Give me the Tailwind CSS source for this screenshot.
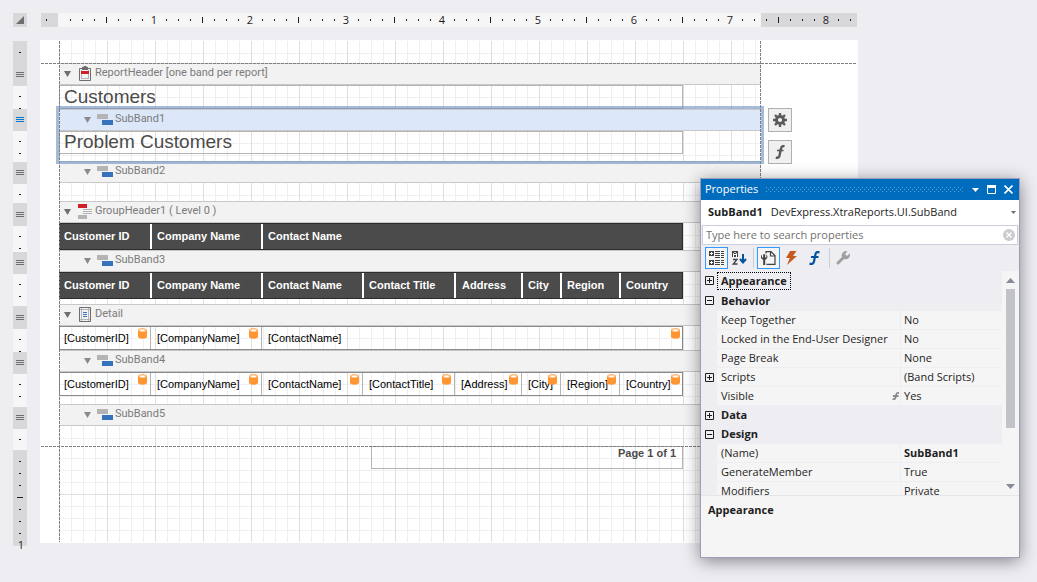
<!DOCTYPE html>
<html lang="en">
  <head>
    <meta charset="UTF-8" />
    <meta name="viewport" content="width=device-width, initial-scale=1.0" />
    <title>Report Designer</title>
    <script src="https://cdn.jsdelivr.net/npm/@tailwindcss/browser@4"></script>
  </head>

  <body class="relative min-h-screen overflow-hidden bg-[#eeedf2] font-['Open_Sans',sans-serif] text-[11px] text-[#1e1e1e]">
    <!-- shared symbols -->
    <svg class="hidden">
      <symbol id="sub" viewBox="0 0 16 11">
        <path fill="#b4b4b4" d="M0 0h11v5H0z" />
        <path fill="#3574bd" d="M5 6h11v5H5z" />
      </symbol>
      <symbol id="db" viewBox="0 0 9 11">
        <path fill="#ff9632" d="M0 2.500C0 1 2 .3 4.500.3S9 1 9 2.500v6c0 1.500-2 2.200-4.500 2.200S0 10 0 8.500z" />
        <ellipse cx="4.500" cy="2.300" rx="4" ry="1.800" fill="#ffc185" />
        <ellipse cx="4.500" cy="2.400" rx="2.500" ry=".8" fill="#fff" />
      </symbol>
      <symbol id="tri" viewBox="0 0 7 6"><path fill="currentColor" d="M0 0h7L3.500 6z" /></symbol>
      <symbol id="grip" viewBox="0 0 8 5"><path fill="currentColor" d="M0 0h8v1H0zM0 2h8v1H0zM0 4h8v1H0z" /></symbol>
      <symbol id="plus" viewBox="0 0 9 9"><path fill="none" stroke="#1e1e1e" d="M.5.5h8v8h-8zM2 4.500h5M4.500 2v5" /></symbol>
      <symbol id="minus" viewBox="0 0 9 9"><path fill="none" stroke="#1e1e1e" d="M.5.5h8v8h-8zM2 4.500h5" /></symbol>
    </svg>

    <main class="pt-[13px] pl-[13px] pr-[179px]">
      <!-- horizontal ruler -->
      <div class="mr-px flex gap-3.5">
        <button class="flex size-3.5 items-center justify-center bg-[#d8d8da]" aria-label="Select report">
          <svg class="size-2" viewBox="0 0 8 8"><path fill="#6e6e6e" d="M8 0v8H0z" /></svg>
        </button>
        <svg class="h-3.5 min-w-0 flex-1 bg-[#f6f6f6]" font-size="11" fill="#1e1e1e" text-anchor="middle">
          <defs>
            <pattern id="ticks" x="17" width="96" height="14" patternUnits="userSpaceOnUse">
              <path d="M12 6h1v2h-1zM24 6h1v2h-1zM36 6h1v2h-1zM48 4h1v6h-1zM60 6h1v2h-1zM72 6h1v2h-1zM84 6h1v2h-1z" />
            </pattern>
          </defs>
          <rect width="17" height="14" fill="#d8d8da" />
          <rect x="720" width="100%" height="14" fill="#d8d8da" />
          <path d="M5 6h1v2H5z" />
          <rect x="17" width="100%" height="14" fill="url(#ticks)" />
          <text x="113" y="11">1</text>
          <text x="209" y="11">2</text>
          <text x="305" y="11">3</text>
          <text x="401" y="11">4</text>
          <text x="497" y="11">5</text>
          <text x="593" y="11">6</text>
          <text x="689" y="11">7</text>
          <text x="785" y="11">8</text>
        </svg>
      </div>

      <div class="mt-[13px] flex items-start gap-[13px]">
        <!-- vertical ruler -->
        <div class="mt-px flex w-3.5 flex-col bg-[#f6f6f6] text-[#6e6e6e] *:shrink-0 *:bg-no-repeat *:data-ticks:bg-[repeating-linear-gradient(#1e1e1e_0_1px,transparent_1px_12px)] *:data-ticks:bg-[position:6px_10px] *:data-ticks:bg-[size:2px_100%]">
          <div class="flex h-[45px] flex-col items-center bg-[#d8d8da]">
            <span class="mt-[11px] h-px w-0.5 bg-[#1e1e1e]"></span>
            <svg class="mt-[19px] h-[5px] w-2"><use href="#grip" /></svg>
          </div>
          <div data-ticks class="h-[23px]"></div>
          <div class="flex h-[22px] justify-center bg-[#d8d8da] pt-2 text-[#0078d0]"><svg class="h-[5px] w-2"><use href="#grip" /></svg></div>
          <div data-ticks class="h-[31px]"></div>
          <div class="flex h-[22px] justify-center bg-[#d8d8da] pt-2"><svg class="h-[5px] w-2"><use href="#grip" /></svg></div>
          <div data-ticks class="h-[19px]"></div>
          <div class="flex h-[23px] justify-center bg-[#d8d8da] pt-[9px]"><svg class="h-[5px] w-2"><use href="#grip" /></svg></div>
          <div data-ticks class="h-[26px]"></div>
          <div class="flex h-[22px] justify-center bg-[#d8d8da] pt-2"><svg class="h-[5px] w-2"><use href="#grip" /></svg></div>
          <div data-ticks class="h-8"></div>
          <div class="flex h-[23px] justify-center bg-[#d8d8da] pt-[9px]"><svg class="h-[5px] w-2"><use href="#grip" /></svg></div>
          <div data-ticks class="h-[23px]"></div>
          <div class="flex h-[22px] justify-center bg-[#d8d8da] pt-2"><svg class="h-[5px] w-2"><use href="#grip" /></svg></div>
          <div data-ticks class="h-[33px]"></div>
          <div class="flex h-[22px] justify-center bg-[#d8d8da] pt-2"><svg class="h-[5px] w-2"><use href="#grip" /></svg></div>
          <div data-ticks class="h-[21px]"></div>
          <svg class="h-[96px] w-3.5 overflow-visible bg-[#d8d8da]" font-size="11" fill="#1e1e1e" text-anchor="middle">
            <path d="M6 11h2v1H6zM6 23h2v1H6zM6 35h2v1H6zM4 47h6v1H4zM6 59h2v1H6zM6 71h2v1H6zM6 83h2v1H6z" />
            <text x="8" y="99">1</text>
          </svg>
        </div>

        <!-- report page -->
        <div class="relative flex min-w-0 flex-1 bg-white pl-[19px] [&_[data-grid]]:bg-[linear-gradient(90deg,#dfdfdf_1px,transparent_1px),repeating-linear-gradient(#dfdfdf_0_1px,transparent_1px_48px),linear-gradient(90deg,#efefef_1px,transparent_1px),repeating-linear-gradient(#efefef_0_1px,transparent_1px_12px)] [&_[data-grid]]:bg-[position:0_0,0_48px,0_0,0_12px] [&_[data-grid]]:bg-[size:48px_100%,100%_100%,12px_100%,100%_100%] [&_[data-grid]]:[background-repeat:repeat-x,no-repeat,repeat-x,no-repeat]">
          <div class="relative min-w-0 flex-1 font-['Liberation_Sans',sans-serif] [&_h2]:flex [&_h2]:h-[22px] [&_h2]:items-center [&_h2]:border-y [&_h2]:border-[#c8c8c8] [&_h2]:bg-[#f2f2f2] [&_h2]:pb-px [&_h2]:font-['Roboto',sans-serif] [&_h2]:text-[11px] [&_h2]:text-[#7b7b7b]">
            <div data-grid class="mt-px h-[22px]"></div>

            <section>
              <h2 class="pl-[5px]">
                <svg class="h-1.5 w-[7px] text-[#6e6e6e]"><use href="#tri" /></svg>
                <svg class="ml-2 mr-1 h-[15px] w-3" viewBox="0 0 12 15">
                  <path fill="none" stroke="#6e6e6e" d="M.5 2.500h11v12H.5z" />
                  <path fill="none" stroke="#b4b4b4" d="M2.500 4v9M9.500 4v9M2 12.500h8" />
                  <path fill="#6e6e6e" d="M3 1h1.500V0h3v1H9v3H3z" />
                  <path fill="#d11f26" d="M2 5h8v3H2z" />
                </svg>
                ReportHeader [one band per report]
              </h2>
              <div data-grid class="h-6">
                <p class="h-6 w-[624px] border border-[#b4b4b4] pl-1 text-[19px] leading-[22px] text-[#4b4b4b]">Customers</p>
              </div>
            </section>

            <section class="relative">
              <h2 class="bg-[#dce8fa]! pl-[25px]">
                <svg class="h-1.5 w-[7px] text-[#8a8a8a]"><use href="#tri" /></svg>
                <svg class="ml-1.5 mr-0.5 h-[11px] w-4"><use href="#sub" /></svg>
                SubBand1
              </h2>
              <div data-grid class="h-[30px]">
                <p class="h-[23px] w-[624px] border border-[#b4b4b4] pl-1 text-[19px] leading-5 text-[#4b4b4b]">Problem Customers</p>
              </div>
              <!-- selection frame -->
              <div class="pointer-events-none absolute -inset-[3px] z-10 border-[3px] border-[#698ebe]/60"></div>
            </section>

            <section>
              <h2 class="pl-[25px]">
                <svg class="h-1.5 w-[7px] text-[#8a8a8a]"><use href="#tri" /></svg>
                <svg class="ml-1.5 mr-0.5 h-[11px] w-4"><use href="#sub" /></svg>
                SubBand2
              </h2>
              <div data-grid class="h-[18px]"></div>
            </section>

            <section>
              <h2 class="pl-[5px]">
                <svg class="h-1.5 w-[7px] text-[#6e6e6e]"><use href="#tri" /></svg>
                <svg class="ml-[7px] mr-[3px] h-[15px] w-3.5" viewBox="0 0 14 15">
                  <path fill="#d11f26" d="M0 0h9v4H0z" />
                  <path fill="#b4b4b4" d="M5 5h9v1H5zM5 7h9v1H5zM5 9h9v1H5zM0 11h9v4H0z" />
                </svg>
                GroupHeader1 ( Level 0 )
              </h2>
              <div data-grid class="h-[27px]">
                <table class="h-[27px] w-[624px] table-fixed border-separate border-spacing-0 border border-[#2d2d2d] bg-[#4b4b4b] text-left font-bold text-white">
                  <tr>
                    <th class="w-[92px] border-r-2 border-white pl-1">Customer ID</th>
                    <th class="w-[111px] border-r-2 border-white pl-[5px]">Company Name</th>
                    <th class="pl-[5px]">Contact Name</th>
                  </tr>
                </table>
              </div>
            </section>

            <section>
              <h2 class="pl-[25px]">
                <svg class="h-1.5 w-[7px] text-[#8a8a8a]"><use href="#tri" /></svg>
                <svg class="ml-1.5 mr-0.5 h-[11px] w-4"><use href="#sub" /></svg>
                SubBand3
              </h2>
              <div data-grid class="h-8">
                <table class="h-[27px] w-[624px] table-fixed border-separate border-spacing-0 border border-[#2d2d2d] bg-[#4b4b4b] text-left font-bold text-white">
                  <tr>
                    <th class="w-[92px] border-r-2 border-white pl-1">Customer ID</th>
                    <th class="w-[111px] border-r-2 border-white pl-[5px]">Company Name</th>
                    <th class="w-[101px] border-r-2 border-white pl-[5px]">Contact Name</th>
                    <th class="w-[92px] border-r-2 border-white pl-[5px]">Contact Title</th>
                    <th class="w-[67px] border-r-2 border-white pl-1.5">Address</th>
                    <th class="w-[39px] border-r-2 border-white pl-[5px]">City</th>
                    <th class="w-[59px] border-r-2 border-white pl-[5px]">Region</th>
                    <th class="pl-[5px]">Country</th>
                  </tr>
                </table>
              </div>
            </section>

            <section>
              <h2 class="pl-[5px]">
                <svg class="h-1.5 w-[7px] text-[#6e6e6e]"><use href="#tri" /></svg>
                <svg class="ml-2 mr-1 h-[15px] w-3" viewBox="0 0 12 15">
                  <path fill="none" stroke="#6e6e6e" d="M.5.5h11v14H.5z" />
                  <path fill="none" stroke="#b4b4b4" d="M2.500 1v13M9.500 1v13M1 2.500h10M1 12.500h10" />
                  <path fill="#3574bd" d="M4 5h4v1H4zM4 7h4v1H4zM4 9h4v1H4z" />
                </svg>
                Detail
              </h2>
              <div data-grid class="h-6">
                <table class="h-6 w-[624px] table-fixed border-separate border-spacing-0 border border-[#8a8a8a] text-black">
                  <tr>
                    <td class="relative w-[91px] border-r border-[#b4b4b4] pl-1">[CustomerID]<svg class="absolute top-px right-[3px] h-[11px] w-[9px]"><use href="#db" /></svg></td>
                    <td class="relative w-[111px] border-r border-[#b4b4b4] pl-1.5">[CompanyName]<svg class="absolute top-px right-[3px] h-[11px] w-[9px]"><use href="#db" /></svg></td>
                    <td class="relative pl-1.5">[ContactName]<svg class="absolute top-px right-0.5 h-[11px] w-[9px]"><use href="#db" /></svg></td>
                  </tr>
                </table>
              </div>
            </section>

            <section>
              <h2 class="pl-[25px]">
                <svg class="h-1.5 w-[7px] text-[#8a8a8a]"><use href="#tri" /></svg>
                <svg class="ml-1.5 mr-0.5 h-[11px] w-4"><use href="#sub" /></svg>
                SubBand4
              </h2>
              <div data-grid class="h-8">
                <table class="h-6 w-[624px] table-fixed border-separate border-spacing-0 border border-[#8a8a8a] text-black">
                  <tr>
                    <td class="relative w-[91px] border-r border-[#b4b4b4] pl-1">[CustomerID]<svg class="absolute top-px right-[3px] h-[11px] w-[9px]"><use href="#db" /></svg></td>
                    <td class="relative w-[111px] border-r border-[#b4b4b4] pl-1.5">[CompanyName]<svg class="absolute top-px right-[3px] h-[11px] w-[9px]"><use href="#db" /></svg></td>
                    <td class="relative w-[101px] border-r border-[#b4b4b4] pl-1.5">[ContactName]<svg class="absolute top-px right-[3px] h-[11px] w-[9px]"><use href="#db" /></svg></td>
                    <td class="relative w-[92px] border-r border-[#b4b4b4] pl-1.5">[ContactTitle]<svg class="absolute top-px right-[3px] h-[11px] w-[9px]"><use href="#db" /></svg></td>
                    <td class="relative w-[67px] border-r border-[#b4b4b4] pl-1.5">[Address]<svg class="absolute top-px right-[3px] h-[11px] w-[9px]"><use href="#db" /></svg></td>
                    <td class="relative w-[39px] border-r border-[#b4b4b4] pl-1.5">[City]<svg class="absolute top-px right-[3px] h-[11px] w-[9px]"><use href="#db" /></svg></td>
                    <td class="relative w-[59px] border-r border-[#b4b4b4] pl-1.5">[Region]<svg class="absolute top-px right-[3px] h-[11px] w-[9px]"><use href="#db" /></svg></td>
                    <td class="relative pl-1.5">[Country]<svg class="absolute top-px right-0.5 h-[11px] w-[9px]"><use href="#db" /></svg></td>
                  </tr>
                </table>
              </div>
            </section>

            <section>
              <h2 class="pl-[25px]">
                <svg class="h-1.5 w-[7px] text-[#8a8a8a]"><use href="#tri" /></svg>
                <svg class="ml-1.5 mr-0.5 h-[11px] w-4"><use href="#sub" /></svg>
                SubBand5
              </h2>
              <div data-grid class="h-5"></div>
            </section>

            <div data-grid class="mb-px h-24">
              <p class="ml-[312px] h-[23px] w-[312px] border border-[#b4b4b4] pr-1.5 text-right leading-3 font-bold text-[#4b4b4b]">Page 1 of 1</p>
            </div>

            <!-- side margin guides -->
            <div class="absolute inset-y-px left-0 w-px bg-[repeating-linear-gradient(#808080_0_3px,transparent_3px_4px)]"></div>
            <div class="absolute inset-y-px right-0 w-px bg-[repeating-linear-gradient(#808080_0_3px,transparent_3px_4px)]"></div>
          </div>

          <div class="flex w-[97px] flex-col gap-2 pt-[68px] pl-[7px]">
            <button class="flex size-6 items-center justify-center border border-[#b0b0b0] bg-[#f0f0f0]" aria-label="Smart tag">
              <svg class="size-3.5" viewBox="-7 -7 14 14" fill="none" stroke="#5a5a5a">
                <circle r="3.600" stroke-width="3" />
                <path stroke-width="2.400" d="M0-7v2.500M0 7V4.500M-7 0h2.500M7 0H4.500M-5-5l1.800 1.800M5 5 3.200 3.200M-5 5l1.800-1.800M5-5 3.200-3.200" />
              </svg>
            </button>
            <button class="flex size-6 items-center justify-center border border-[#b0b0b0] bg-[#f0f0f0]" aria-label="Expression editor">
              <svg class="h-3.5 w-2.5" viewBox="0 0 10 14" fill="none" stroke="#5a5a5a">
                <path stroke-width="2.400" d="M9.500 1.300C7.500.7 6.400 1.500 6 3.500L4.500 10.500C4.100 12.500 3 13.200.8 12.600" />
                <path stroke-width="1.600" d="M2 5.500h6.500" />
              </svg>
            </button>
          </div>

          <!-- top and bottom margin guides -->
          <div class="absolute inset-x-px top-[23px] h-px bg-[repeating-linear-gradient(90deg,#808080_0_3px,transparent_3px_4px)]"></div>
          <div class="absolute inset-x-px bottom-24 h-px bg-[repeating-linear-gradient(90deg,#808080_0_3px,transparent_3px_4px)]"></div>
        </div>
      </div>
    </main>

    <!-- floating tool window -->
    <aside class="absolute top-[178px] right-[17px] z-20 w-80 border border-[#9b9fb9] bg-[#eeedf2] shadow-[0_3px_16px_rgba(0,0,0,0.45)]">
      <header class="flex h-[21px] items-center bg-[#006cbe] pr-1.5 pl-1 text-white">
        <h1 class="text-[11px]">Properties</h1>
        <svg class="mx-2 h-[5px] min-w-0 flex-1">
          <pattern id="dots" width="4" height="4" patternUnits="userSpaceOnUse"><path fill="#59a8de" d="M0 0h1v1H0zM2 2h1v1H2z" /></pattern>
          <rect width="100%" height="5" fill="url(#dots)" />
        </svg>
        <button class="flex w-2 justify-center" aria-label="Window position"><svg class="h-1 w-[7px]" viewBox="0 0 7 4"><path fill="#fff" d="M0 0h7L3.500 4z" /></svg></button>
        <button class="ml-2" aria-label="Maximize"><svg class="size-[9px]" viewBox="0 0 9 9"><path fill="none" stroke="#fff" d="M.5.5h8v8h-8z" /><path fill="#fff" d="M0 0h9v3H0z" /></svg></button>
        <button class="ml-2" aria-label="Close"><svg class="size-[9px]" viewBox="0 0 9 9"><path stroke="#fff" stroke-width="1.600" d="m.5.5 8 8m0-8-8 8" /></svg></button>
      </header>

      <button class="flex h-[25px] w-full items-center bg-white pr-[3px] pl-[7px]" aria-haspopup="listbox">
        <b>SubBand1</b><span class="ml-2">DevExpress.XtraReports.UI.SubBand</span>
        <svg class="ml-auto h-[3px] w-[5px]" viewBox="0 0 5 3"><path fill="#6e6e6e" d="M0 0h5L2.500 3z" /></svg>
      </button>

      <div class="mx-px flex h-5 items-center border border-[#ccccdc] bg-white pr-0.5 pl-[3px]">
        <input class="min-w-0 flex-1 outline-none placeholder:text-[#717171]" type="text" placeholder="Type here to search properties" aria-label="Search properties" />
        <button aria-label="Clear">
          <svg class="size-3" viewBox="0 0 12 12"><circle cx="6" cy="6" r="6" fill="#ccc" /><path stroke="#fff" stroke-width="1.300" d="m3.500 3.500 5 5m0-5-5 5" /></svg>
        </button>
      </div>

      <div class="flex h-[26px] items-center pl-1">
        <button class="flex h-[22px] w-[23px] items-center justify-center border border-[#3399ff] bg-[#f5f5f5]" aria-label="Categorized">
          <svg class="h-3.5 w-[15px]" viewBox="0 0 15 14">
            <path fill="#424242" d="M0 0h5v5H0zM0 9h5v5H0z" />
            <path fill="#fff" d="M1 2h3v1H1zM2 1h1v3H2zM1 11h3v1H1zM2 10h1v3H2z" />
            <path stroke="#424242" stroke-dasharray="5 1 3 1" d="M6 .5h9M6 2.500h9M6 4.500h9M6 6.500h9M6 9.500h9M6 11.500h9M6 13.500h9" />
          </svg>
        </button>
        <button class="ml-1" aria-label="Alphabetical">
          <svg class="h-3.5 w-[15px]" viewBox="0 0 15 14">
            <path fill="#424242" d="M0 0h6v6H0z" />
            <path fill="none" stroke="#fff" d="M1.500 6V2.500l1-1h1l1 1V6M2 3.500h2" />
            <path fill="none" stroke="#424242" stroke-width="1.300" d="M1 8.500h4L1.300 13H5.500" />
            <path fill="none" stroke="#00539c" stroke-width="2" d="M11 3v8M8 8l3 3.500L14 8" />
          </svg>
        </button>
        <span class="mr-[3px] ml-1.5 h-5 w-px bg-[#ccccdc]"></span>
        <button class="flex h-[22px] w-[23px] items-center justify-center border border-[#3399ff] bg-[#f5f5f5]" aria-label="Properties">
          <svg class="h-3.5 w-[15px]" viewBox="0 0 15 14">
            <path fill="none" stroke="#424242" stroke-width="1.200" d="M5 2.500V.6h5l4 4v8.800H5.500M9.500 1v4H14" />
            <path fill="#424242" d="M1 3.500v3h1.200V3.300h2v3.200H5.400v-3C7 5 6.800 8 4.200 8.700V14h-2V8.700C-.4 8-.6 5 1 3.500z" />
          </svg>
        </button>
        <button class="ml-1.5" aria-label="Events"><svg class="h-3.5 w-[11px]" viewBox="0 0 11 14"><path fill="#c75a1e" d="M4 0h6.500L7 5h4L1 14l2.800-7H0z" /></svg></button>
        <button class="ml-3" aria-label="Expressions">
          <svg class="h-3.5 w-[11px]" viewBox="0 0 11 14" fill="none" stroke="#00539c"><path stroke-width="2.200" d="M10.500 1.400C8 .5 6.800 1.300 6.400 3.500L5 10.500C4.600 12.700 3 13.300.5 12.600" /><path stroke-width="2" d="M2 6h7.500" /></svg>
        </button>
        <span class="mr-1.5 ml-[9px] h-5 w-px bg-[#ccccdc]"></span>
        <button aria-label="Property pages">
          <svg class="size-3.5" viewBox="0 0 14 14"><path fill="none" stroke="#a0a0a0" stroke-width="3" stroke-linecap="round" d="m2 12 5.500-5.500" /><path fill="#a0a0a0" d="M11.500.4A4.300 4.300 0 0 0 5.800 5.500l2.700 2.700A4.300 4.300 0 0 0 13.600 2.500L11 5 9 3z" /></svg>
        </button>
      </div>

      <div class="flex h-[225px] overflow-hidden border-b border-[#e6e6ea]">
        <div class="min-w-0 flex-1 overflow-hidden">
          <table class="w-full table-fixed border-separate border-spacing-0 text-left [&_td]:h-[19px] [&_td]:border-b [&_td]:border-[#eeedf2] [&_td]:bg-[#f5f5f5] [&_td]:p-0 [&_td]:pl-1 [&_td]:leading-4 [&_th]:border-b [&_th]:border-transparent [&_th]:p-0 [&_th]:leading-4 [&_th]:first:pl-1">
            <colgroup><col class="w-4" /><col class="w-[184px]" /><col /></colgroup>
            <tr class="h-5"><th><svg class="size-[9px]"><use href="#plus" /></svg></th><th colspan="2"><span class="inline-block border border-dotted border-black px-[3px]">Appearance</span></th></tr>
            <tr class="h-5"><th><svg class="size-[9px]"><use href="#minus" /></svg></th><th colspan="2"><span class="pl-1">Behavior</span></th></tr>
            <tr><th></th><td class="border-r">Keep Together</td><td class="pl-[3px]!">No</td></tr>
            <tr><th></th><td class="border-r">Locked in the End-User Designer</td><td class="pl-[3px]!">No</td></tr>
            <tr><th></th><td class="border-r">Page Break</td><td class="pl-[3px]!">None</td></tr>
            <tr><th><svg class="size-[9px]"><use href="#plus" /></svg></th><td class="border-r">Scripts</td><td class="pl-[3px]!">(Band Scripts)</td></tr>
            <tr>
              <th></th>
              <td class="border-r">
                <div class="flex items-center justify-between pr-px">
                  Visible
                  <svg class="h-2 w-[7px]" viewBox="0 0 7 8" fill="none" stroke="#8a8a8a" stroke-width="1.800"><path d="M7 1C5 .6 4.500 1 4.200 2.500L3.500 5.500C3.200 7 2.500 7.500.5 7M1 4h5.500" /></svg>
                </div>
              </td>
              <td class="pl-[3px]!">Yes</td>
            </tr>
            <tr class="h-[19px]"><th><svg class="size-[9px]"><use href="#plus" /></svg></th><th colspan="2"><span class="pl-1">Data</span></th></tr>
            <tr class="h-[19px]"><th><svg class="size-[9px]"><use href="#minus" /></svg></th><th colspan="2"><span class="pl-1">Design</span></th></tr>
            <tr><th></th><td class="border-r">(Name)</td><td class="pl-[3px]! font-bold">SubBand1</td></tr>
            <tr><th></th><td class="border-r">GenerateMember</td><td class="pl-[3px]!">True</td></tr>
            <tr><th></th><td class="border-r">Modifiers</td><td class="pl-[3px]!">Private</td></tr>
          </table>
        </div>
        <div class="flex w-[17px] flex-col items-center bg-[#f5f5f5] pt-[7px] pb-1.5">
          <svg class="h-[5px] w-[9px]" viewBox="0 0 9 5"><path fill="#868999" d="M4.500 0 9 5H0z" /></svg>
          <div class="mt-1.5 h-[139px] w-[9px] bg-[#c2c3c9]"></div>
          <svg class="mt-auto h-[5px] w-[9px]" viewBox="0 0 9 5"><path fill="#868999" d="M0 0h9L4.500 5z" /></svg>
        </div>
      </div>

      <div class="h-[61px] bg-[#f5f5f5] px-[7px] py-1.5 font-bold">Appearance</div>
    </aside>
  </body>
</html>
